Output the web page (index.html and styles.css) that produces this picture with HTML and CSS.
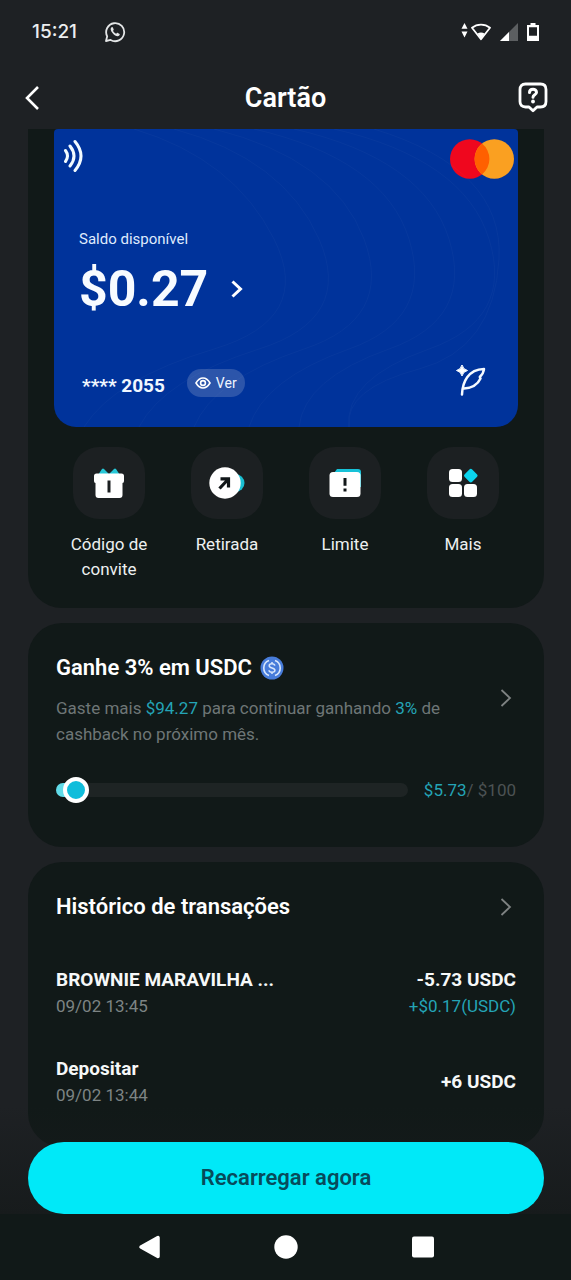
FILE: index.html
```html
<!DOCTYPE html>
<html lang="pt-BR">
<head>
<meta charset="utf-8">
<meta name="viewport" content="width=device-width, initial-scale=1">
<title>Cartão</title>
<link rel="stylesheet" href="styles.css">
</head>
<body>
<div class="status">
  <div class="status-group status-left">
    <time class="clock">15:21</time>
    <svg width="22" height="22" viewBox="0 0 22 22" fill="none" stroke="#e4e6e7"><path d="M2 20l1.200-4.700A9 9 0 1 1 6.600 18.900z" stroke-width="1.800" stroke-linejoin="round"/><path d="M7.600 6.200c-1.500 1-1.200 3.200.9 5.700 2.400 2.900 5.100 4.200 6.700 2.700.8-.8.7-1.500 0-1.900l-1.400-.8c-.5-.2-.8-.1-1.100.3l-.5.6c-1.500-.6-2.500-1.600-3.200-3l.5-.6c.3-.4.3-.6.1-1l-.7-1.600c-.3-.6-.8-.7-1.300-.4z" fill="#e4e6e7" stroke="none"/></svg>
  </div>
  <div class="status-group status-right">
    <svg width="30" height="18" viewBox="0 0 30 18"><path d="M3.500 0l3 5.800h-6zM3.500 14.500l3-6h-6z" fill="#fff"/><path d="M11 4.800c5.200-4.200 12.800-4.200 18 0L20 16.300z" fill="none" stroke="#fff" stroke-width="1.800" stroke-linejoin="round"/><path d="M16.400 10.600q3.600-2 7.200 0L20 16z" fill="#fff"/></svg>
    <svg width="18" height="18" viewBox="0 0 18 18"><path d="M18 0v18H0z" fill="#5c5f61"/><path d="M9 9v9H0z" fill="#fff"/></svg>
    <svg width="12" height="18" viewBox="0 0 12 18"><path d="M3.500 0h5v2H12v16H0V2h3.500zM2 4.200v8.600h8V4.200z" fill="#fff" fill-rule="evenodd"/></svg>
  </div>
</div>
<header class="topbar">
  <button class="icon-button" aria-label="Voltar"><svg width="16" height="26" viewBox="0 0 16 26" fill="none" stroke="#fff" stroke-width="2.600"><path d="M15 2L4 13l11 11"/></svg></button>
  <h1 class="topbar-title">Cartão</h1>
  <button class="icon-button" aria-label="Ajuda"><svg width="30" height="31" viewBox="0 0 30 31" fill="none" stroke="#fff" stroke-linecap="round" stroke-linejoin="round"><path d="M7.500 2h15Q28 2 28 7.500v12Q28 25 22.500 25H19l-4 3.800L11 25H7.500Q2 25 2 19.500v-12Q2 2 7.500 2z" stroke-width="2.800"/><path d="M11.500 10.500c0-4.400 7-4.300 7-.3 0 2.700-3.500 2.500-3.500 5.100" stroke-width="3"/><circle cx="15" cy="19.500" r="1.900" fill="#fff" stroke="none"/></svg></button>
</header>
<main class="content">
  <section class="panel panel-card">
    <div class="card">
      <svg class="card-pattern" viewBox="0 0 464 298" preserveAspectRatio="none" fill="none" stroke="#fff"><path d="M80 0q100 30 140 110t-60 110-130 78M120 0q110 30 145 110t-60 110-120 78M160 0q120 30 150 110t-60 110-110 78M200 0q130 30 155 110t-60 110-100 78M240 0q130 30 155 110t-60 110-90 78M280 0q130 30 155 110t-60 110-80 78M320 0q130 40 125 130t-80 110-70 58"/></svg>
      <div class="card-brand">
        <svg width="21" height="34" viewBox="0 0 21 34" fill="none" stroke="#f2fbff" stroke-width="3" stroke-linecap="round"><path d="M2.500 11.500q4 5.500 0 11M7 7q8 10 0 20M12 2.500q12 14.500 0 29"/></svg>
        <svg width="64" height="40" viewBox="0 0 64 40"><circle cx="19.700" cy="20" r="19.700" fill="#ef071e"/><circle cx="44.300" cy="20" r="19.700" fill="#faa021"/><path d="M32 4.600a19.700 19.700 0 0 1 0 30.800 19.700 19.700 0 0 1 0-30.800z" fill="#ff6000"/></svg>
      </div>
      <div class="card-balance">
        <span class="balance-label">Saldo disponível</span>
        <button class="balance-value">$0.27 <svg width="12" height="18" viewBox="0 0 12 18" fill="none" stroke="#fff" stroke-width="3"><path d="M1.500 1.500L9.500 9l-8 7.500"/></svg></button>
      </div>
      <div class="card-foot">
        <span class="card-number">**** 2055</span>
        <button class="view-button"><svg width="16" height="12" viewBox="0 0 16 12" fill="none" stroke="#fff" stroke-width="1.600"><path d="M1 6q3-5 7-5t7 5q-3 5-7 5T1 6z"/><circle cx="8" cy="6" r="2.400"/></svg>Ver</button>
        <svg class="quill" width="30" height="32" viewBox="0 0 30 32" fill="none" stroke="#f5faff" stroke-width="2.500" stroke-linejoin="round" stroke-linecap="round"><path d="M6 29.500C6.500 17 12 4.500 28 4c-.3 3-1.600 5.500-4.200 8l.7 1.500C21.500 20 15 23 8 23.500"/><path d="M6 0q1 4.500 5.500 5.500Q7 6.500 6 11 5 6.500.5 5.500 5 4.500 6 0z" fill="#fff" stroke-width="1"/></svg>
      </div>
    </div>
    <nav class="shortcuts">
      <button class="shortcut"><span class="tile"><svg width="32" height="32" viewBox="0 0 32 32"><path d="M5 8l4-6q1-1 2 0l5 5 5-5q1-1 2 0l4 6z" fill="#27c7d7"/><path d="M3.500 6.500h25q2.500 0 2.500 2.500v5q0 2-1.500 2v12q0 3-3 3h-21q-3 0-3-3V16Q1 16 1 14V9q0-2.500 2.500-2.500z" fill="#fff"/><path d="M16 13.500v12" stroke="#1b1f21" stroke-width="3"/></svg></span>Código de convite</button>
      <button class="shortcut"><span class="tile"><svg width="36" height="32" viewBox="0 0 36 32"><circle cx="26.500" cy="16" r="9" fill="#19bfd2"/><circle cx="16" cy="16" r="15.700" fill="#fff"/><path d="M10.500 21.500l8.500-9M11.500 11.800h8v8.700" fill="none" stroke="#111618" stroke-width="3.200"/></svg></span>Retirada</button>
      <button class="shortcut"><span class="tile"><svg width="32" height="30" viewBox="0 0 32 30"><path d="M8 1h21q3 0 3 3v15H5V5z" fill="#17c2d8"/><rect y="4" x=".5" width="31" height="25" rx="3.500" fill="#fff"/><path d="M16 10v7.800M16 20.500v3" stroke="#111618" stroke-width="3"/></svg></span>Limite</button>
      <button class="shortcut"><span class="tile"><svg width="30" height="30" viewBox="0 0 30 30" fill="#fff"><rect x="1" y="1" width="13" height="13" rx="3.500"/><rect x="1" y="16" width="13" height="13" rx="3.500"/><rect x="16" y="16" width="13" height="13" rx="3.500"/><rect x="17.500" y="2.300" width="10.600" height="10.600" rx="2" transform="rotate(45 22.800 7.600)" fill="#0bd4ee"/></svg></span>Mais</button>
    </nav>
  </section>

  <section class="panel">
    <div class="panel-head">
      <div>
        <h2 class="panel-title">Ganhe 3% em USDC <svg width="24" height="24" viewBox="0 0 24 24" fill="none" stroke="#d9e7fb"><circle cx="12" cy="12" r="11.500" fill="#477cda" stroke="none"/><path d="M9 4.500a8 8 0 0 0 0 15M15 4.500a8 8 0 0 1 0 15" stroke-width="1.600"/><path d="M14.800 9.700c-.3-2.600-5.600-2.600-5.600 0 0 3 5.700 1.500 5.700 4.600 0 2.700-5.700 2.700-5.900 0M12 6v2M12 16v2" stroke-width="1.500"/></svg></h2>
        <p class="note">Gaste mais <span class="accent">$94.27</span> para continuar ganhando <span class="accent">3%</span> de cashback no próximo mês.</p>
      </div>
      <button class="icon-button more" aria-label="Ver cashback"><svg width="12" height="20" viewBox="0 0 12 20" fill="none" stroke="#7e8282" stroke-width="1.800"><path d="M1.500 2l8.500 8-8.500 8"/></svg></button>
    </div>
    <div class="goal">
      <div class="track" role="progressbar" aria-label="Gasto do mês" aria-valuemin="0" aria-valuemax="100" aria-valuenow="5.73"><div class="fill" style="width:5.73%"></div></div>
      <span class="goal-text"><span class="accent">$5.73</span>/ $100</span>
    </div>
  </section>

  <section class="panel">
    <div class="panel-head">
      <h2 class="panel-title">Histórico de transações</h2>
      <button class="icon-button more" aria-label="Ver histórico"><svg width="12" height="20" viewBox="0 0 12 20" fill="none" stroke="#7e8282" stroke-width="1.800"><path d="M1.500 2l8.500 8-8.500 8"/></svg></button>
    </div>
    <ul class="transactions">
      <li class="transaction">
        <div><div class="tx-main">BROWNIE MARAVILHA ...</div><div class="tx-date">09/02 13:45</div></div>
        <div class="tx-amount"><div class="tx-main">-5.73 USDC</div><div class="accent">+$0.17(USDC)</div></div>
      </li>
      <li class="transaction">
        <div><div class="tx-main">Depositar</div><div class="tx-date">09/02 13:44</div></div>
        <div class="tx-amount"><div class="tx-main">+6 USDC</div></div>
      </li>
    </ul>
  </section>
</main>
<div class="cta"><button class="cta-button">Recarregar agora</button></div>
<nav class="system-nav">
  <button class="icon-button" aria-label="Voltar"><svg width="24" height="24" viewBox="0 0 24 24"><path d="M21 2.500v19L4 12z" fill="#fff" stroke="#fff" stroke-width="3.500" stroke-linejoin="round"/></svg></button>
  <button class="icon-button" aria-label="Início"><svg width="24" height="24" viewBox="0 0 24 24"><circle cx="12" cy="12" r="11.700" fill="#fff"/></svg></button>
  <button class="icon-button" aria-label="Recentes"><svg width="24" height="24" viewBox="0 0 24 24"><rect x="1" y="1.500" width="22" height="21" rx="2" fill="#fff"/></svg></button>
</nav>
</body>
</html>
```
FILE: styles.css
```css
*, *::after { box-sizing: border-box; }
body {
  margin: 0;
  height: 100vh;
  display: flex;
  flex-direction: column;
  background: #1e2124;
  color: #fff;
  font-family: Roboto, "Liberation Sans", sans-serif;
  font-size: 17px;
  line-height: 26px;
}
h1, h2, p, ul { margin: 0; padding: 0; }
ul { list-style: none; }
svg { display: block; flex: none; }
button { margin: 0; padding: 0; border: 0; background: none; color: inherit; font: inherit; cursor: pointer; }
.icon-button { display: flex; align-items: center; justify-content: center; }

.status { flex: none; height: 64px; padding: 0 32px; display: flex; align-items: center; justify-content: space-between; }
.status-group { display: flex; align-items: center; }
.status-left { gap: 27px; }
.status-right { gap: 9px; }
.clock { font-family: Inter, sans-serif; font-size: 19px; font-weight: 500; color: #eceeef; }
.topbar { flex: none; height: 65px; padding: 2px 23px 0; display: grid; grid-template-columns: 30px 1fr 30px; align-items: center; }
.topbar .icon-button:first-child { justify-content: flex-start; }
.topbar-title { text-align: center; font-size: 27px; line-height: 32px; font-weight: 600; }

.content { flex: 1; min-height: 0; overflow-y: auto; scrollbar-width: none; padding: 0 27px 68px 28px; display: flex; flex-direction: column; gap: 15px; }
.panel { flex: none; padding: 25px 28px 39px; border-radius: 34px; background: #111918; }
.panel-card { padding: 0 26px 26px; border-radius: 0 0 34px 34px; }

.card { position: relative; min-height: 298px; padding: 9px 4px 30px 9px; display: flex; flex-direction: column; border-radius: 4px 4px 22px 22px; background: #00339b; }
.card-pattern { position: absolute; inset: 0; width: 100%; height: 100%; opacity: .025; }
.card-brand { display: flex; align-items: flex-start; justify-content: space-between; height: 42px; padding-top: 1px; }
.card-balance { padding: 46px 0 0 16px; display: flex; flex-direction: column; align-items: flex-start; }
.balance-label { font-size: 15px; color: #dfeafd; }
.balance-value { display: flex; align-items: center; gap: 23px; font-size: 50px; line-height: 74px; font-weight: 700; color: #f7fbff; }
.card-foot { margin-top: auto; padding: 0 28px 0 19px; display: flex; align-items: flex-end; }
.card-number { font-size: 19px; line-height: 22px; font-weight: 700; color: #f0f7ff; }
.view-button { display: flex; align-items: center; gap: 5px; height: 28px; margin-left: 22px; padding: 0 8px; border-radius: 14px; background: #2c55aa; font-size: 14px; color: #f0f6ff; }
.quill { margin-left: auto; }

.shortcuts { margin-top: 20px; padding: 0 10px; display: flex; justify-content: space-between; align-items: flex-start; }
.shortcut { width: 90px; display: flex; flex-direction: column; align-items: center; gap: 13px; line-height: 25px; color: #edf0f0; }
.tile { width: 72px; height: 72px; display: flex; align-items: center; justify-content: center; border-radius: 26px; background: #1c2022; }

.panel-head { display: flex; align-items: center; justify-content: space-between; gap: 40px; }
.panel-title { display: flex; align-items: center; gap: 8px; font-size: 22px; line-height: 40px; font-weight: 600; }
.more { padding: 0 4px; }
.note { margin-top: 7px; color: #6e7676; }
.accent { color: #24a4b6; }
.goal { margin: 30px 0 5px; display: flex; align-items: center; gap: 16px; }
.track { flex: 1; height: 14px; border-radius: 7px; background: #1e2424; }
.fill { position: relative; height: 14px; border-radius: 7px; background: #61dbe8; }
.fill::after { content: ""; position: absolute; right: -13px; top: -6px; width: 26px; height: 26px; border: 4px solid #fff; border-radius: 50%; background: #10bddb; }
.goal-text { color: #4c5253; }

.transactions { margin-top: 40px; display: flex; flex-direction: column; gap: 37px; }
.transaction { display: flex; align-items: center; justify-content: space-between; }
.tx-main { font-size: 19px; font-weight: 700; color: #f6f8f8; }
.tx-date { color: #7d8484; }
.tx-amount { text-align: right; }

.cta { position: relative; flex: none; margin-top: -108px; padding: 36px 27px 0 28px; background: linear-gradient(#17191a00, #171b1c); }
.cta-button { display: block; width: 100%; height: 72px; border-radius: 36px; background: #00e9f8; color: #074b5b; font-size: 22px; font-weight: 600; }
.system-nav { flex: none; height: 66px; padding: 0 136px 0 137px; display: flex; align-items: center; justify-content: space-between; background: #111918; }
```
